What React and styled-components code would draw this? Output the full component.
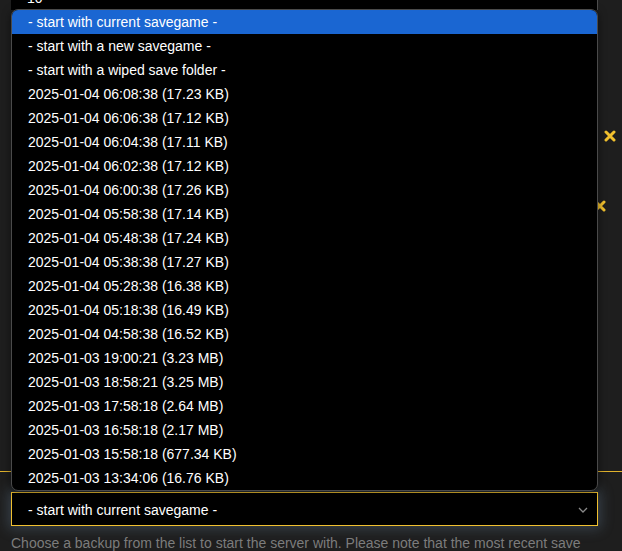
import React from 'react';
import styled, { createGlobalStyle } from 'styled-components';

const GlobalStyle = createGlobalStyle`
  html, body {
    margin: 0;
    padding: 0;
    background: #1e1e1e;
    overflow: hidden;
  }
  body {
    font-family: "Liberation Sans", Arial, sans-serif;
    font-size: 14px;
  }
`;

const Page = styled.div`
  position: relative;
  width: 622px;
  height: 551px;
  overflow: hidden;
`;

const Form = styled.div`
  display: flex;
  flex-direction: column;
  padding-left: 11px;
`;

const TopInput = styled.div`
  width: 587px;
  height: 24px;
  margin-top: -14px;
  box-sizing: border-box;
  background: #000;
  color: #fff;
  padding: 0 16px;
  line-height: 24px;
  border-right: 1px solid #4d4d4d;
`;

const Row = styled.div`
  display: flex;
  align-items: center;
  height: 36px;
  margin-top: ${(p) => p.$top}px;
`;

const RowField = styled.div`
  width: 587px;
  height: 100%;
  box-sizing: border-box;
  background: #000;
`;

const RemoveButton = styled.button`
  display: flex;
  align-items: center;
  justify-content: center;
  width: 24px;
  height: 24px;
  padding: 0;
  margin-left: ${(p) => p.$shift || 0}px;
  border: none;
  background: transparent;
  cursor: pointer;
`;

const Divider = styled.hr`
  height: 1px;
  margin: ${(p) => p.$top}px 0 0 -11px;
  border: none;
  background: #e0b22c;
`;

const SelectBox = styled.div`
  display: flex;
  align-items: center;
  justify-content: space-between;
  width: 587px;
  height: 34px;
  margin-top: 20px;
  box-sizing: border-box;
  padding: 1px 9px 0 16px;
  background: #000;
  color: #fff;
  border: 1px solid #f0c030;
  box-shadow: 0 0 12px 3px rgba(110, 140, 170, 0.3);
`;

const HelpText = styled.p`
  width: 587px;
  margin: 9px 0 0;
  color: #7c7c7c;
  line-height: 16px;
`;

const OptionList = styled.ul`
  position: absolute;
  top: 9px;
  left: 11px;
  width: 587px;
  margin: 0;
  padding: 0;
  list-style: none;
  box-sizing: border-box;
  background: #000;
  border: 1px solid #4a4a4a;
  border-radius: 7px;
  overflow: hidden;
  box-shadow: 0 2px 8px rgba(0, 0, 0, 0.5);
`;

const Option = styled.li`
  height: 24px;
  box-sizing: border-box;
  padding: 1px 0 0 16px;
  line-height: 23px;
  color: #fff;
  background: ${(p) => (p.$active ? '#1a66d2' : 'transparent')};
  white-space: nowrap;
`;

function XIcon() {
  return (
    <svg width="12" height="12" viewBox="0 0 12 12">
      <path
        d="M2 2 L10 10 M10 2 L2 10"
        stroke="#f2c12e"
        strokeWidth="3"
        strokeLinecap="round"
      />
    </svg>
  );
}

function Chevron() {
  return (
    <svg width="10" height="6" viewBox="0 0 10 6">
      <path d="M1 1 L5 5 L9 1" fill="none" stroke="#8a8a8a" strokeWidth="1.3" />
    </svg>
  );
}

const options = [
  '- start with current savegame -',
  '- start with a new savegame -',
  '- start with a wiped save folder -',
  '2025-01-04 06:08:38 (17.23 KB)',
  '2025-01-04 06:06:38 (17.12 KB)',
  '2025-01-04 06:04:38 (17.11 KB)',
  '2025-01-04 06:02:38 (17.12 KB)',
  '2025-01-04 06:00:38 (17.26 KB)',
  '2025-01-04 05:58:38 (17.14 KB)',
  '2025-01-04 05:48:38 (17.24 KB)',
  '2025-01-04 05:38:38 (17.27 KB)',
  '2025-01-04 05:28:38 (16.38 KB)',
  '2025-01-04 05:18:38 (16.49 KB)',
  '2025-01-04 04:58:38 (16.52 KB)',
  '2025-01-03 19:00:21 (3.23 MB)',
  '2025-01-03 18:58:21 (3.25 MB)',
  '2025-01-03 17:58:18 (2.64 MB)',
  '2025-01-03 16:58:18 (2.17 MB)',
  '2025-01-03 15:58:18 (677.34 KB)',
  '2025-01-03 13:34:06 (16.76 KB)',
];

export default function App() {
  return (
    <Page>
      <GlobalStyle />
      <Form>
        <TopInput>10</TopInput>
        <Row $top={108}>
          <RowField />
          <RemoveButton>
            <XIcon />
          </RemoveButton>
        </Row>
        <Row $top={34}>
          <RowField />
          <RemoveButton $shift={-10}>
            <XIcon />
          </RemoveButton>
        </Row>
        <Divider $top={247} />
        <SelectBox>
          <span>- start with current savegame -</span>
          <Chevron />
        </SelectBox>
        <HelpText>
          Choose a backup from the list to start the server with. Please note that the most recent save
          may not be included.
        </HelpText>
      </Form>
      <OptionList>
        {options.map((o, i) => (
          <Option key={o} $active={i === 0}>
            {o}
          </Option>
        ))}
      </OptionList>
    </Page>
  );
}
